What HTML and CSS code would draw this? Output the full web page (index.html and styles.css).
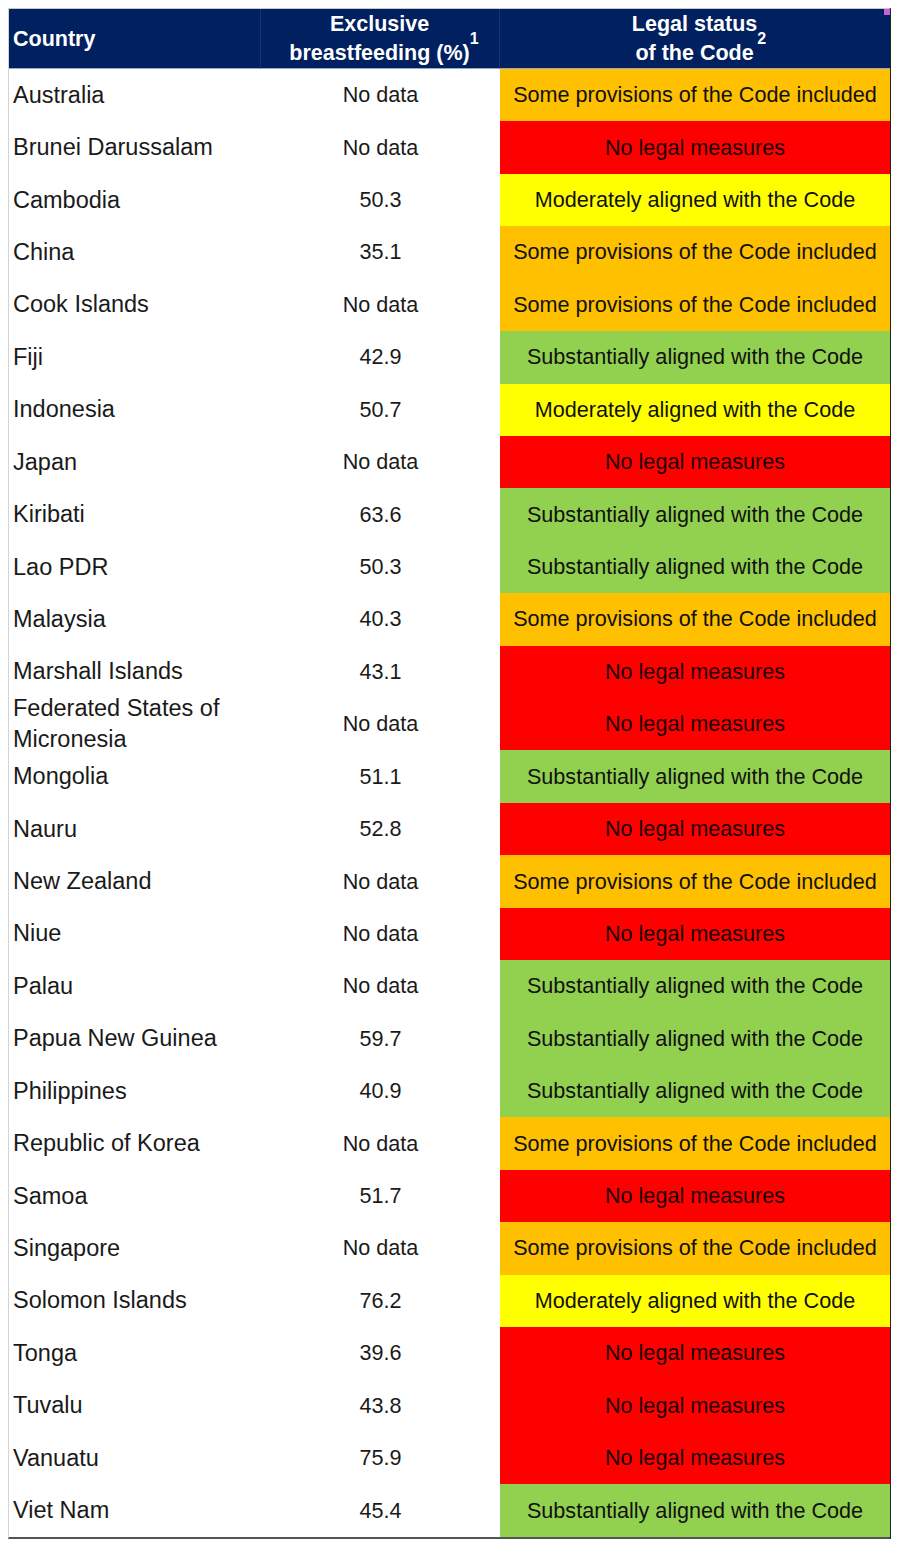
FILE: index.html
```html
<!DOCTYPE html>
<html lang="en">
<head>
<meta charset="utf-8">
<title>Breastfeeding and the Code</title>
<link rel="stylesheet" href="styles.css">
</head>
<body>
<div class="sheet">
  <div class="hd hd-country">Country</div>
  <div class="hd hd-center">Exclusive<br>breastfeeding (%)<span class="sup">1</span></div>
  <div class="hd hd-center hd-last">Legal status<br>of the Code<span class="sup">2</span><span class="mark"></span></div>

  <div class="c country">Australia</div><div class="c val">No data</div><div class="c st some">Some provisions of the Code included</div>
  <div class="c country">Brunei Darussalam</div><div class="c val">No data</div><div class="c st none">No legal measures</div>
  <div class="c country">Cambodia</div><div class="c val">50.3</div><div class="c st mod">Moderately aligned with the Code</div>
  <div class="c country">China</div><div class="c val">35.1</div><div class="c st some">Some provisions of the Code included</div>
  <div class="c country">Cook Islands</div><div class="c val">No data</div><div class="c st some">Some provisions of the Code included</div>
  <div class="c country">Fiji</div><div class="c val">42.9</div><div class="c st sub">Substantially aligned with the Code</div>
  <div class="c country">Indonesia</div><div class="c val">50.7</div><div class="c st mod">Moderately aligned with the Code</div>
  <div class="c country">Japan</div><div class="c val">No data</div><div class="c st none">No legal measures</div>
  <div class="c country">Kiribati</div><div class="c val">63.6</div><div class="c st sub">Substantially aligned with the Code</div>
  <div class="c country">Lao PDR</div><div class="c val">50.3</div><div class="c st sub">Substantially aligned with the Code</div>
  <div class="c country">Malaysia</div><div class="c val">40.3</div><div class="c st some">Some provisions of the Code included</div>
  <div class="c country">Marshall Islands</div><div class="c val">43.1</div><div class="c st none">No legal measures</div>
  <div class="c country two">Federated States of<br>Micronesia</div><div class="c val">No data</div><div class="c st none">No legal measures</div>
  <div class="c country">Mongolia</div><div class="c val">51.1</div><div class="c st sub">Substantially aligned with the Code</div>
  <div class="c country">Nauru</div><div class="c val">52.8</div><div class="c st none">No legal measures</div>
  <div class="c country">New Zealand</div><div class="c val">No data</div><div class="c st some">Some provisions of the Code included</div>
  <div class="c country">Niue</div><div class="c val">No data</div><div class="c st none">No legal measures</div>
  <div class="c country">Palau</div><div class="c val">No data</div><div class="c st sub">Substantially aligned with the Code</div>
  <div class="c country">Papua New Guinea</div><div class="c val">59.7</div><div class="c st sub">Substantially aligned with the Code</div>
  <div class="c country">Philippines</div><div class="c val">40.9</div><div class="c st sub">Substantially aligned with the Code</div>
  <div class="c country">Republic of Korea</div><div class="c val">No data</div><div class="c st some">Some provisions of the Code included</div>
  <div class="c country">Samoa</div><div class="c val">51.7</div><div class="c st none">No legal measures</div>
  <div class="c country">Singapore</div><div class="c val">No data</div><div class="c st some">Some provisions of the Code included</div>
  <div class="c country">Solomon Islands</div><div class="c val">76.2</div><div class="c st mod">Moderately aligned with the Code</div>
  <div class="c country">Tonga</div><div class="c val">39.6</div><div class="c st none">No legal measures</div>
  <div class="c country">Tuvalu</div><div class="c val">43.8</div><div class="c st none">No legal measures</div>
  <div class="c country">Vanuatu</div><div class="c val">75.9</div><div class="c st none">No legal measures</div>
  <div class="c country">Viet Nam</div><div class="c val">45.4</div><div class="c st sub">Substantially aligned with the Code</div>
</div>
</body>
</html>
```

FILE: styles.css
```css
html, body {
  margin: 0;
  padding: 0;
  background: #ffffff;
}

body {
  padding: 8px 0 0 8px;
  font-family: "Liberation Sans", Arial, sans-serif;
  color: #111111;
}

.sheet {
  width: 883px;
  box-sizing: border-box;
  display: grid;
  grid-template-columns: 252px 239px 390px;
  grid-template-rows: 60px repeat(28, 52.43px);
  border-top: 1px solid #c8c8c8;
  border-left: 1px solid #d4d4d4;
  border-right: 2px solid #222222;
  border-bottom: 2px solid #555555;
}

.hd {
  background: #002060;
  color: #ffffff;
  font-weight: bold;
  font-size: 21.5px;
  line-height: 29.5px;
  display: flex;
  align-items: center;
  border-bottom: 1px solid #9aa8c8;
  border-right: 1px solid #1a3370;
}

.hd-country {
  padding-left: 4px;
  padding-top: 2px;
}

.hd-center {
  justify-content: center;
  text-align: center;
  padding-top: 1px;
  padding-left: 8px;
}

.hd-last {
  position: relative;
  border-right: none;
}

.sup {
  font-size: 16px;
  line-height: 16px;
  vertical-align: text-top;
  margin-left: 0;
}

.mark {
  position: absolute;
  top: 0;
  right: 0;
  width: 6px;
  height: 6px;
  background: #c462d6;
}

.c {
  display: flex;
  align-items: center;
  overflow: visible;
}

.country {
  font-size: 23.5px;
  line-height: 31px;
  padding-left: 4px;
  color: #1a1a1a;
}

.val {
  justify-content: center;
  font-size: 21.6px;
  color: #1a1a1a;
}

.st {
  justify-content: center;
  font-size: 21.6px;
  color: #111111;
  white-space: nowrap;
}

.some { background: #ffc000; }
.none { background: #ff0000; color: #1a0000; }
.mod  { background: #ffff00; }
.sub  { background: #92d050; }
```
